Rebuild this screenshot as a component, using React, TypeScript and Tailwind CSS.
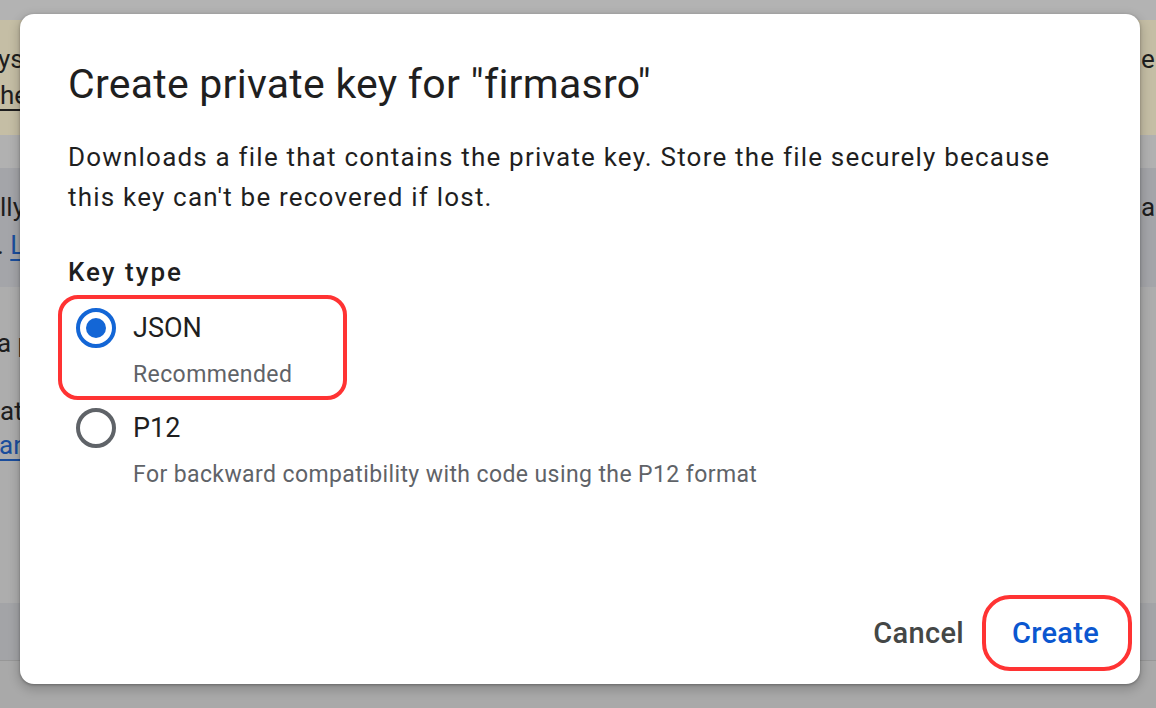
import React from 'react'

function Radio({ checked }: { checked: boolean }) {
  return (
    <div
      className={`flex h-[40px] w-[40px] shrink-0 items-center justify-center rounded-full border-[4px] ${
        checked ? 'border-[#1366d6]' : 'border-[#5f6368]'
      }`}
    >
      {checked && <div className="h-[20px] w-[20px] rounded-full bg-[#1366d6]" />}
    </div>
  )
}

// a line of the page behind the overlay, mostly hidden by the dialog
function EdgeLine({ children, className = '' }: { children: React.ReactNode; className?: string }) {
  return <div className={`whitespace-nowrap ${className}`}>{children}</div>
}

export default function App() {
  return (
    <div className="relative h-[708px] w-[1156px] overflow-hidden bg-[#adadad] font-['Roboto',sans-serif] text-[26px] text-[#1e1e1e]">
      {/* dimmed page behind the dialog */}
      <div className="flex h-full flex-col">
        <div className="h-[20px] bg-[#b3b3b3]" />
        <div className="flex h-[115px] justify-between bg-[#c5bea5] pt-[21px] leading-[36px]">
          <div className="w-[40px] overflow-hidden">
            <EdgeLine className="ml-[-2px]">ys</EdgeLine>
            <EdgeLine>
              <span className="underline decoration-[2px] underline-offset-[5px]">he</span>
            </EdgeLine>
          </div>
          <div className="w-[16px] overflow-hidden">
            <EdgeLine className="ml-[1px]">e</EdgeLine>
          </div>
        </div>
        <div className="h-[33px] bg-[#b1b1b1]" />
        <div className="flex h-[119px] justify-between bg-[#a4a5a9] pt-[20px] leading-[38px]">
          <div className="w-[40px] overflow-hidden">
            <EdgeLine>lly</EdgeLine>
            <EdgeLine className="ml-[-3px]">
              <span>. </span>
              <span className="text-[#1a4d9c] underline decoration-[2px] underline-offset-[5px]">L</span>
            </EdgeLine>
          </div>
          <div className="w-[16px] overflow-hidden">
            <EdgeLine className="ml-[1px]">a</EdgeLine>
          </div>
        </div>
        <div className="h-[316px] bg-[#adadad] pt-[39px] leading-[34px]">
          <div className="w-[40px] overflow-hidden">
            <EdgeLine className="ml-[-3px]">a p</EdgeLine>
            <EdgeLine className="mt-[34px]">at</EdgeLine>
            <EdgeLine className="ml-[-1px]">
              <span className="text-[#1a4d9c] underline decoration-[2px] underline-offset-[5px]">an</span>
            </EdgeLine>
          </div>
        </div>
        <div className="h-[58px] border-b border-[#979797] bg-[#a3a4a7]" />
        <div className="flex-1 bg-[#a9a9a9]" />
      </div>

      {/* dialog */}
      <div className="absolute left-[20px] top-[14px] flex h-[670px] w-[1120px] flex-col rounded-[14px] bg-white px-[48px] pt-[46px] shadow-[0_4px_10px_3px_rgba(0,0,0,0.15),0_1px_3px_rgba(0,0,0,0.3)]">
        <h1 className="text-[41px] leading-[48px] font-normal tracking-[0.25px] text-[#1f1f1f]">Create private key for "firmasro"</h1>

        <p className="mt-[29px] text-[26px] leading-[40px] tracking-[1.2px] text-[#1f1f1f]">
          Downloads a file that contains the private key. Store the file securely because this key can't be recovered if lost.
        </p>

        <div className="mt-[39px] text-[26px] leading-[32px] font-medium tracking-[2px] text-[#1f1f1f]">Key type</div>

        <div className="mt-[20px] flex flex-col">
          <div className="relative">
            <div className="flex h-[40px] items-center gap-[17px] pl-[8px]">
              <Radio checked />
              <span className="text-[27px] text-[#1f1f1f]">JSON</span>
            </div>
            <div className="mt-[12px] pl-[65px] text-[23px] leading-[30px] tracking-[0.4px] text-[#5f6368]">Recommended</div>
            <div className="pointer-events-none absolute left-[-10px] top-[-13px] h-[105px] w-[289px] rounded-[20px] border-[4px] border-[#ff3333]" />
          </div>

          <div className="mt-[18px] flex h-[40px] items-center gap-[17px] pl-[8px]">
            <Radio checked={false} />
            <span className="text-[27px] text-[#1f1f1f]">P12</span>
          </div>
          <div className="mt-[12px] pl-[65px] text-[23px] leading-[30px] tracking-[0.4px] text-[#5f6368]">
            For backward compatibility with code using the P12 format
          </div>
        </div>

        <div className="mt-auto mb-[18px] mr-[-27px] flex justify-end gap-[8px]">
          <button className="h-[64px] px-[20px] text-[29px] font-medium tracking-[0.3px] text-[#444746]">Cancel</button>
          <div className="relative">
            <button className="h-[64px] px-[20px] text-[29px] font-medium tracking-[0.3px] text-[#0b57d0]">Create</button>
            <div className="pointer-events-none absolute bottom-[-5px] left-[-10px] right-[-13px] top-[-7px] rounded-[28px] border-[4px] border-[#ff3333]" />
          </div>
        </div>
      </div>
    </div>
  )
}
